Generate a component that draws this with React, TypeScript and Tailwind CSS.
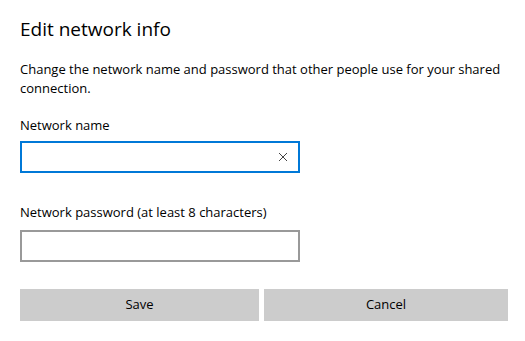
import React from "react";

export default function App() {
  const font = { fontFamily: '"Open Sans", "Noto Sans", sans-serif' };
  return (
    <div className="w-[525px] h-[341px] bg-white text-black pl-[20px] pt-[15px]" style={font}>
      <div className="text-[19px] leading-[28px] text-black">Edit network info</div>
      <div className="mt-[17px] text-[13px] leading-[19px] w-[500px] text-black">
        Change the network name and password that other people use for your shared connection.
      </div>
      <div className="mt-[18px] text-[13px] leading-[19px] text-black">Network name</div>
      <div className="mt-[6px] w-[280px] h-[32px] border-2 border-[#0078d7] flex items-center justify-end pr-[10px]">
        <svg width="10" height="10" viewBox="0 0 10 10">
          <path d="M1 1 L9 9 M9 1 L1 9" stroke="#444" strokeWidth="1" />
        </svg>
      </div>
      <div className="mt-[30px] text-[13px] leading-[19px] text-black">Network password (at least 8 characters)</div>
      <div className="mt-[8px] w-[280px] h-[32px] border-2 border-[#999999]" />
      <div className="mt-[27px] flex gap-[5px]">
        <button className="w-[239px] h-[32px] bg-[#cccccc] text-[13px] text-black">Save</button>
        <button className="w-[244px] h-[32px] bg-[#cccccc] text-[13px] text-black">Cancel</button>
      </div>
    </div>
  );
}
